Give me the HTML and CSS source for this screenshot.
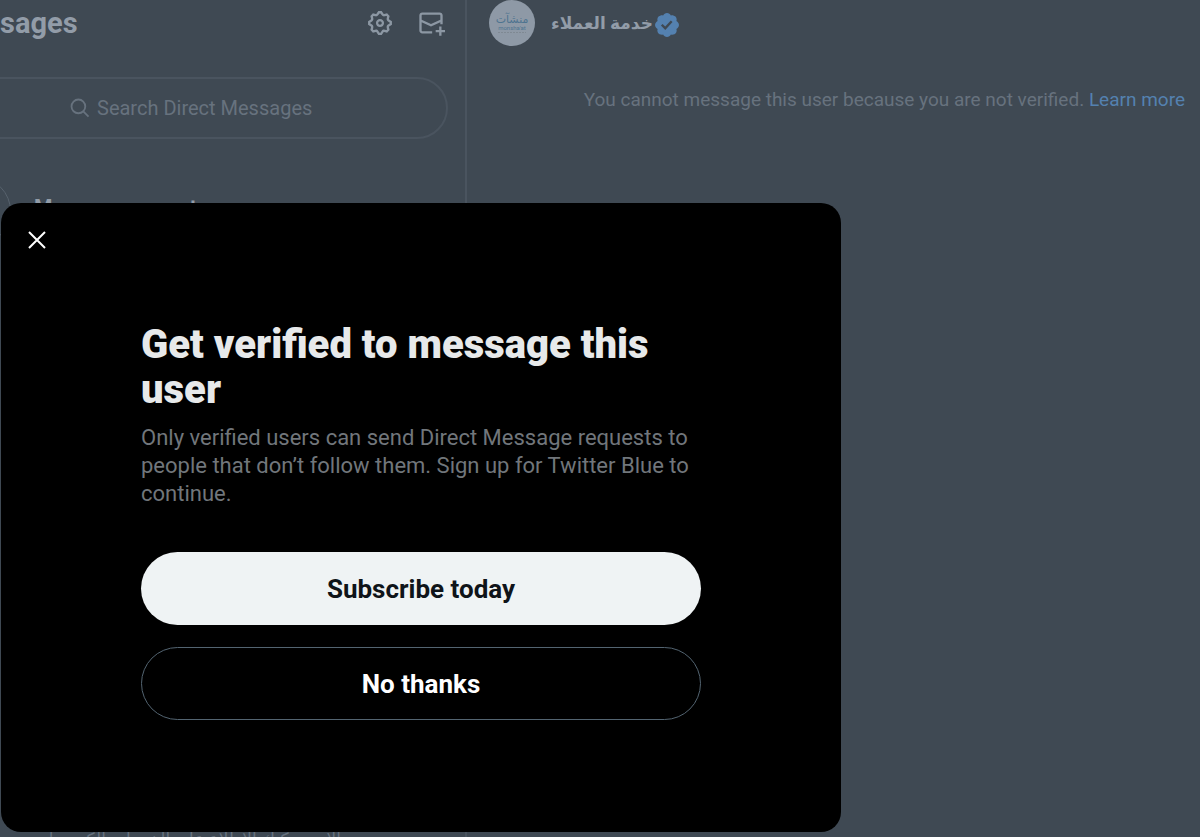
FILE: index.html
```
<!DOCTYPE html>
<html lang="en">
<head>
    <meta charset="UTF-8">
    <meta name="viewport" content="width=device-width, initial-scale=1.0">
    <title>Messages</title>
    <link rel="stylesheet" href="styles.css">
</head>
<body>
    <div class="app">
        <section class="inbox">
            <header class="inbox-header">
                <h1>sages</h1>
                <button class="icon-button" aria-label="Settings">
                    <svg viewBox="0 0 24 24" width="28" height="28" fill="currentColor"><path d="M10.54 1.75h2.92l1.57 2.36c.11.17.32.25.53.21l2.53-.59 2.17 2.17-.58 2.54c-.05.2.04.41.21.53l2.36 1.57v2.92l-2.36 1.57c-.17.12-.26.33-.21.53l.58 2.54-2.17 2.17-2.53-.59c-.21-.04-.42.04-.53.21l-1.57 2.36h-2.92l-1.58-2.36c-.11-.17-.32-.25-.52-.21l-2.54.59-2.17-2.17.58-2.54c.05-.2-.03-.41-.21-.53l-2.35-1.57v-2.92L4.1 8.97c.18-.12.26-.33.21-.53L3.73 5.9 5.9 3.73l2.54.59c.2.04.41-.04.52-.21l1.58-2.36zm1.07 2l-.98 1.47C10.05 6.08 9 6.5 7.99 6.27l-1.46-.34-.6.6.33 1.46c.24 1.01-.18 2.07-1.05 2.64l-1.46.98v.78l1.46.98c.87.57 1.29 1.63 1.05 2.64l-.33 1.46.6.6 1.46-.34c1.01-.23 2.06.19 2.64 1.05l.98 1.47h.78l.97-1.47c.58-.86 1.63-1.28 2.65-1.05l1.45.34.61-.6-.34-1.46c-.23-1.01.18-2.07 1.05-2.64l1.47-.98v-.78l-1.47-.98c-.87-.57-1.28-1.63-1.05-2.64l.34-1.46-.61-.6-1.45.34c-1.02.23-2.07-.19-2.65-1.05l-.97-1.47h-.78zM12 10.5c-.83 0-1.5.67-1.5 1.5s.67 1.5 1.5 1.5c.82 0 1.5-.67 1.5-1.5s-.68-1.5-1.5-1.5zM8.5 12c0-1.93 1.56-3.5 3.5-3.5 1.93 0 3.5 1.57 3.5 3.5s-1.57 3.5-3.5 3.5c-1.94 0-3.5-1.57-3.5-3.5z"/></svg>
                </button>
                <button class="icon-button" aria-label="New message">
                    <svg viewBox="0 0 24 24" width="28" height="28" fill="currentColor"><path d="M1.998 5.5c0-1.381 1.119-2.5 2.5-2.5h15c1.381 0 2.5 1.119 2.5 2.5V13h-2v-1.537l-8 3.635-8-3.635V18.500c0 .276.224.5.5.5H13v2H4.498c-1.381 0-2.500-1.119-2.500-2.500v-13zm2 3.767l8 3.635 8-3.635V5.500c0-.276-.224-.500-.500-.500h-15c-.276 0-.500.224-.500.500v3.767zM19 18v-3h2v3h3v2h-3v3h-2v-3h-3v-2h3z"/></svg>
                </button>
            </header>
            <label class="search">
                <svg viewBox="0 0 24 24" width="22" height="22" fill="none" stroke="currentColor" stroke-width="2"><circle cx="10.250" cy="10.250" r="7.500"/><path d="M15.600 15.600l5.700 5.700"/></svg>
                <input type="text" placeholder="Search Direct Messages" aria-label="Search Direct Messages">
            </label>
            <div class="requests">
                <span class="requests-icon"></span>
                <strong>Message requests</strong>
            </div>
            <p class="preview" dir="rtl">الآن، يمكنك الاطلاع على الخدمات إلكترونياً</p>
        </section>

        <main class="chat">
            <header class="chat-header">
                <svg class="avatar" viewBox="0 0 46 46" width="46" height="46">
                    <circle cx="23" cy="23" r="23"/>
                    <text class="logo-ar" x="23" y="23">منشآت</text>
                    <text class="logo-en" x="23" y="30">monsha'at</text>
                    <path d="M9 32.500h28" stroke="#7f8993" stroke-dasharray="2 1"/>
                </svg>
                <h2 dir="rtl">خدمة العملاء</h2>
                <svg class="badge" viewBox="0 0 22 22" width="28" height="28"><path d="M20.396 11c-.018-.646-.215-1.275-.570-1.816-.354-.540-.852-.972-1.438-1.246.223-.607.270-1.264.140-1.897-.131-.634-.437-1.218-.882-1.687-.470-.445-1.053-.750-1.687-.882-.633-.130-1.290-.083-1.897.140-.273-.587-.704-1.086-1.245-1.440S11.647 1.620 11 1.604c-.646.017-1.273.213-1.813.568s-.969.854-1.240 1.440c-.608-.223-1.267-.272-1.902-.140-.635.130-1.220.436-1.690.882-.445.470-.749 1.055-.878 1.688-.130.633-.080 1.290.144 1.896-.587.274-1.087.705-1.443 1.245-.356.540-.555 1.170-.574 1.817.020.647.218 1.276.574 1.817.356.540.856.972 1.443 1.245-.224.606-.274 1.263-.144 1.896.130.634.433 1.218.877 1.688.470.443 1.054.747 1.687.878.633.132 1.290.084 1.897-.136.274.586.705 1.084 1.246 1.439.540.354 1.170.551 1.816.569.647-.016 1.276-.213 1.817-.567s.972-.854 1.245-1.440c.604.239 1.266.296 1.903.164.636-.132 1.220-.447 1.680-.907.460-.460.776-1.044.908-1.681s.075-1.299-.165-1.903c.586-.274 1.084-.705 1.439-1.246.354-.540.551-1.170.569-1.816zM9.662 14.850l-3.429-3.428 1.293-1.302 2.072 2.072 4.400-4.794 1.347 1.246z"/></svg>
            </header>
            <p class="notice">You cannot message this user because you are not verified. <a href="#">Learn more</a></p>
        </main>
    </div>

    <div class="modal" role="dialog" aria-modal="true" aria-labelledby="modal-title">
        <button class="close" aria-label="Close">
            <svg viewBox="0 0 18 18" width="18" height="18" fill="none" stroke="currentColor" stroke-width="2"><path d="M1 1l16 16M17 1L1 17"/></svg>
        </button>
        <h2 id="modal-title">Get verified to message this user</h2>
        <p>Only verified users can send Direct Message requests to people that don’t follow them. Sign up for Twitter Blue to continue.</p>
        <button class="btn btn-primary">Subscribe today</button>
        <button class="btn btn-outline">No thanks</button>
    </div>
</body>
</html>
```
FILE: styles.css
```
* {
    box-sizing: border-box;
}
body {
    margin: 0;
    font-family: Roboto, "DejaVu Sans", sans-serif;
    background-color: #3f4953;
    color: #929ca8;
    overflow: hidden;
}
h1, h2, p {
    margin: 0;
}
button {
    font-family: inherit;
    cursor: pointer;
}
.app {
    display: flex;
    height: 100vh;
}
.inbox {
    display: flex;
    flex-direction: column;
    width: 467px;
    flex-shrink: 0;
    border-right: 2px solid #4a545f;
    overflow: hidden;
}
.inbox-header {
    display: flex;
    align-items: center;
    gap: 23px;
    height: 46px;
    padding-right: 20px;
}
.inbox-header h1 {
    flex: 1;
    font-size: 29px;
    line-height: 36px;
}
.icon-button {
    display: flex;
    padding: 0;
    border: none;
    background: none;
    color: #8c97a3;
}
.search {
    display: flex;
    align-items: center;
    gap: 6px;
    height: 62px;
    margin: 31px 17px 0 -40px;
    padding-left: 107px;
    border: 2px solid #4a545f;
    border-radius: 31px;
    color: #67727e;
}
.search input {
    flex: 1;
    min-width: 0;
    padding: 0;
    border: none;
    outline: none;
    background: none;
    font-family: inherit;
    font-size: 20px;
    color: inherit;
}
.search input::placeholder {
    color: inherit;
    opacity: 1;
}
.requests {
    display: flex;
    gap: 23px;
    height: 68px;
    margin: 38px 0 0 -57px;
    font-size: 21px;
    line-height: 60px;
}
.requests-icon {
    width: 68px;
    height: 68px;
    border: 1px solid #57626d;
    border-radius: 50%;
}
.preview {
    height: 10px;
    margin: auto 124px 0 0;
    font-size: 17px;
    line-height: 24px;
    white-space: nowrap;
    color: #67727e;
}
.chat {
    flex: 1;
}
.chat-header {
    display: flex;
    align-items: center;
    height: 46px;
    padding-left: 22px;
}
.chat-header h2 {
    margin-left: 16px;
    font-size: 17px;
    line-height: 28px;
}
.avatar circle {
    fill: #8e99a6;
}
.avatar text {
    text-anchor: middle;
    fill: #4e7490;
}
.logo-ar {
    font-size: 11px;
}
.logo-en {
    font-size: 6px;
}
.badge {
    margin-top: 3px;
    fill: #5481b0;
}
.notice {
    margin-top: 40px;
    padding-right: 15px;
    font-size: 19px;
    line-height: 28px;
    text-align: right;
    color: #67727e;
}
.notice a {
    color: #5481b0;
    text-decoration: none;
}
.modal {
    position: absolute;
    top: 203px;
    left: 1px;
    display: flex;
    flex-direction: column;
    width: 70%;
    padding: 27px 140px 112px;
    border-radius: 20px;
    background-color: #000;
}
.modal h2 {
    margin-top: 72px;
    font-size: 40px;
    font-weight: 900;
    line-height: 45px;
    color: #e7e9ea;
}
.modal p {
    margin: 12px 0 44px;
    font-size: 22px;
    line-height: 28px;
    color: #71767b;
}
.close {
    display: flex;
    align-self: flex-start;
    margin-left: -114px;
    padding: 1px;
    border: none;
    background: none;
    color: #fff;
}
.btn {
    height: 73px;
    border-radius: 37px;
    font-size: 26px;
    font-weight: 700;
}
.btn-primary {
    margin-bottom: 22px;
    border: none;
    background-color: #eff3f4;
    color: #0f1419;
}
.btn-outline {
    border: 1px solid #536471;
    background-color: #000;
    color: #fff;
}
```
